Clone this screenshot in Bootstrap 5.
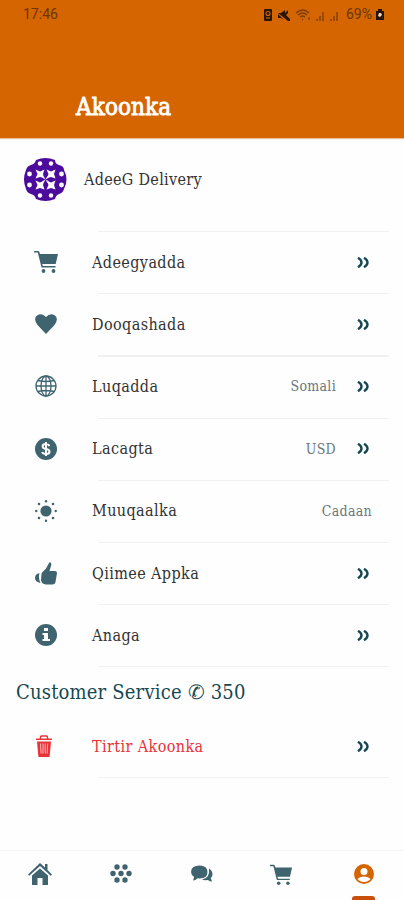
<!DOCTYPE html>
<html lang="so">
<head>
<meta charset="utf-8">
<meta name="viewport" content="width=device-width, initial-scale=1">
<title>Akoonka</title>
<link href="https://cdn.jsdelivr.net/npm/bootstrap@5.3.0/dist/css/bootstrap.min.css" rel="stylesheet">
<style>
:root{--slate:#3f6470;--deep:#164852;--brand:#d46500}
body{font-family:"DejaVu Serif Condensed","DejaVu Serif",serif;font-stretch:condensed;background:#fefefe;color:#333;height:900px;overflow:hidden}
.topbar{height:138px;background:var(--brand);box-shadow:0 1px 1px #e9bd94}
.status{height:29px;padding:0 20px 0 23px;font:14px/29px Roboto,sans-serif;color:#6b3508}
.title{font-size:24px;line-height:30px;font-weight:normal;-webkit-text-stroke:.8px #fff;color:#fff;letter-spacing:.1px;margin:63px 0 0 76px}
.profile{height:93px;padding:0 0 10px 24px}
.profile span{margin-left:17px;font-size:16px;letter-spacing:.3px}
.item{height:62.2px;border:0;padding:0 34px 0 32px;position:relative;background:none}
.item::before{content:"";position:absolute;left:98px;right:15px;top:0;height:1px;background:#f1f1f1}
.item.strong::before{height:2px}
.item.removal::before{display:none}
.item .ico{width:27px;text-align:center;line-height:0;flex:none}
.item .lbl{margin-left:33px;padding-top:1px;font-size:16px;line-height:24px;letter-spacing:.4px;color:#333;white-space:nowrap}
.item .val{font-size:14px;letter-spacing:.3px;padding-top:1px;color:#69777c;margin-left:auto}
.item .val.cadaan{margin-right:-2px}
.item .chev{margin-left:21px;margin-right:1px}
.item .lbl + .chev{margin-left:auto}
.item.removal .lbl,.item.removal .ico{color:#e83238}
.item.removal .ico{padding-right:3px}
.item.last::after{content:"";position:absolute;left:98px;right:15px;bottom:0;height:1px;background:#f2f2f2}
.service{height:49px;padding:3px 0 0 16px;font-size:20px;letter-spacing:.18px;color:var(--deep);white-space:nowrap;position:relative}
.service::before{content:"";position:absolute;left:98px;right:15px;top:0;height:1px;background:#f2f2f2}
.tabs{height:50px;border-top:1px solid #f5f5f5;background:#fefefe}
.tabs a{width:20%;color:var(--slate);position:relative;line-height:0;padding-top:12px;text-align:center}
.tabs a.active{color:var(--brand)}
.tabs a.active::after{content:"";position:absolute;left:50%;margin-left:-12px;bottom:0;width:23px;height:4px;border-radius:3px 3px 0 0;background:#c8500a}
svg{fill:currentColor}
.ico{color:var(--slate)}.chev{color:var(--deep);line-height:0}
</style>
</head>
<body class="d-flex flex-column">
<svg width="0" height="0" class="position-absolute" aria-hidden="true">
<symbol id="cart" viewBox="0 0 26 24"><path d="M1 1h4q1 0 1.400 1L7 4h18l-2.300 10H9.200l.6 2H22.500v1.500H8.500L4.800 2.500H1z"/><circle cx="10.500" cy="21" r="1.900"/><circle cx="20.500" cy="21" r="1.900"/></symbol>
<symbol id="more" viewBox="0 0 12 11"><path fill="none" stroke="currentColor" stroke-width="2.400" d="M1 .8Q4.500 3 4.500 5.500T1 10.200M7 .8q3.500 2.200 3.500 4.700T7 10.200"/></symbol>
</svg>
<header class="topbar flex-shrink-0">
<div class="status d-flex align-items-center justify-content-between"><span>17:46</span>
<span class="d-flex align-items-center">
<svg width="79" height="14" viewBox="0 0 79 14"><g fill="#2a1606"><path d="M1 2q0-1 1-1h6q1 0 1 1v10q0 1-1 1H2q-1 0-1-1z"/><path d="M15 5h3l4-3v3l3-3v3l-2 2 4 4v2h-2L15 5zM15 6l6 6-3-2h-3z"/></g><g fill="none" stroke="#d46500" stroke-width="1.100"><circle cx="5" cy="5.500" r="2"/><path d="M3 10h4"/></g><g fill="none" stroke="#7b3c06" stroke-width="1.300"><path d="M33 5q7-6 13 0M35 7q5-4 9 0M37 9q3-2 5 0M39 11l1 1M46 9v3M54 11v2M57 8v5M60 4v9M68 11v2M71 8v5M74 4v9"/></g></svg>
<span class="ms-1">69%</span>
<svg class="ms-1" width="8" height="13" viewBox="0 0 8 13"><path fill="#26140a" d="M2 1h4v2h2v9H0V3h2z"/><path fill="#f3d3b5" d="M3 5h2l1 2-2 2-2-1z"/></svg>
</span></div>
<h1 class="title">Akoonka</h1>
</header>
<main class="flex-grow-1">
<div class="profile d-flex align-items-center">
<svg width="43" height="43" viewBox="0 0 43 43"><path fill="#4c0b9c" d="M12 2Q21.500-2 31 2q0 4 4 5 5 1 5 5 5 9.500 0 19-1 4-5 5-3 1-4 5-9.500 4-19 0-1-4-5-5-4-1-5-5-4-9.500 0-19 1-4 5-5 4-1 5-5z"/><g fill="#fff"><circle cx="16" cy="5.500" r="2.200"/><circle cx="27" cy="5.500" r="2.200"/><circle cx="16" cy="37.500" r="2.200"/><circle cx="27" cy="37.500" r="2.200"/><circle cx="5.500" cy="16" r="2.400"/><circle cx="5.500" cy="27" r="2.400"/><circle cx="37.500" cy="16" r="2.400"/><circle cx="37.500" cy="27" r="2.400"/><path id="star" d="M11.500 11.500l4.500 2 4.500-2-1.500 4.500 1.500 4.500-4.500-1.500-4.500 1.500 2-4.500z"/><use href="#star" x="11"/><use href="#star" y="11"/><use href="#star" x="11" y="11"/><path d="M18 18h7v7h-7z"/></g><path fill="#4c0b9c" d="M21.500 14l2 4-2 3.500-2-3.500zM21.500 21.500l2 3.500-2 4-2-4zM14 21.500l4-2 3.500 2-3.500 2zM21.500 21.500l3.500-2 4 2-4 2z"/></svg>
<span>AdeeG Delivery</span>
</div>
<div class="list-group list-group-flush">
<a href="#" class="list-group-item item d-flex align-items-center"><span class="ico"><svg width="26" height="24"><use href="#cart"/></svg></span><span class="lbl">Adeegyadda</span><span class="chev"><svg width="12" height="11"><use href="#more"/></svg></span></a>
<a href="#" class="list-group-item item d-flex align-items-center"><span class="ico"><svg width="22" height="20" viewBox="0 0 22 20"><path d="M11 20L2.500 11Q-2 5 2 1.500 7-1.500 11 3q4-4.500 9-1.500 4 3.500-.5 9.500z"/></svg></span><span class="lbl">Dooqashada</span><span class="chev"><svg width="12" height="11"><use href="#more"/></svg></span></a>
<a href="#" class="list-group-item item strong d-flex align-items-center"><span class="ico"><svg width="22" height="22" viewBox="0 0 22 22"><g fill="none" stroke="currentColor" stroke-width="1.300"><circle cx="11" cy="11" r="10"/><ellipse cx="11" cy="11" rx="5" ry="10"/><path d="M11 1v20M1 11h20M3 5.500q8 2 16 0M3 16.500q8-2 16 0"/></g></svg></span><span class="lbl">Luqadda</span><span class="val">Somali</span><span class="chev"><svg width="12" height="11"><use href="#more"/></svg></span></a>
<a href="#" class="list-group-item item d-flex align-items-center"><span class="ico"><svg width="22" height="22" viewBox="0 0 22 22"><circle cx="11" cy="11" r="11"/><path fill="none" stroke="#fff" stroke-width="2" d="M14.500 8q-1-2-3.500-2-3.300 0-3.300 2.300T11 11q3.500.5 3.500 2.700T11 16q-3 0-3.800-2M11 4v14"/></svg></span><span class="lbl">Lacagta</span><span class="val">USD</span><span class="chev"><svg width="12" height="11"><use href="#more"/></svg></span></a>
<a href="#" class="list-group-item item d-flex align-items-center"><span class="ico"><svg width="22" height="22" viewBox="0 0 22 22"><circle cx="11" cy="11" r="5.600"/><g><circle cx="11" cy="1.300" r="1.200"/><circle cx="11" cy="20.700" r="1.200"/><circle cx="1.300" cy="11" r="1.200"/><circle cx="20.700" cy="11" r="1.200"/><circle cx="4" cy="4" r="1.300"/><circle cx="18" cy="4" r="1.300"/><circle cx="4" cy="18" r="1.300"/><circle cx="18" cy="18" r="1.300"/></g></svg></span><span class="lbl">Muuqaalka</span><span class="val cadaan">Cadaan</span></a>
<a href="#" class="list-group-item item d-flex align-items-center"><span class="ico"><svg width="22" height="23" viewBox="0 0 22 23"><path d="M6.500 12q0-1.500 1.500-2.500l3-3L14 1q1-1.500 2 0 .7 1 0 3l-1.500 5H20q2 0 2 2l-1.500 9q-.5 2.500-3 2.500H11Q6.500 22 6 18zM4.500 11q-1.500 5 1 10Q0 20 0 16t4.500-5z"/></svg></span><span class="lbl">Qiimee Appka</span><span class="chev"><svg width="12" height="11"><use href="#more"/></svg></span></a>
<a href="#" class="list-group-item item d-flex align-items-center"><span class="ico"><svg width="22" height="22" viewBox="0 0 22 22"><circle cx="11" cy="11" r="11"/><path fill="#fff" d="M9 4h4v3H9zM7.500 9H13v6h2v2H7.500v-2H9v-4H7.500z"/></svg></span><span class="lbl">Anaga</span><span class="chev"><svg width="12" height="11"><use href="#more"/></svg></span></a>
</div>
<div class="service d-flex align-items-center"><span>Customer Service ✆ 350</span></div>
<div class="list-group list-group-flush">
<a href="#" class="list-group-item item removal last d-flex align-items-center"><span class="ico"><svg width="18" height="22" viewBox="0 0 18 22"><path fill="none" stroke="currentColor" stroke-width="1.400" d="M5.500 4V2q0-1 1-1h5q1 0 1 1v2"/><path d="M1 3.500h16V5H1zM2 6.500h14L14.700 21q0 1-1 1H4.300q-1 0-1-1z"/><path stroke="#fbb" stroke-width="1" d="M5.500 8.500l.6 10M8 8.500v10M10.200 8.500v10M12.700 8.500l-.6 10"/></svg></span><span class="lbl">Tirtir Akoonka</span><span class="chev"><svg width="12" height="11"><use href="#more"/></svg></span></a>
</div>
</main>
<nav class="tabs d-flex flex-shrink-0">
<a href="#"><svg width="24" height="23" viewBox="0 0 24 23"><path d="M12 0l5 4.500V1h2.500v6L24 11.500l-1.200 1.200L12 3 1.200 12.700 0 11.500z"/><path d="M4 12.500l8-7 8 7V22h-5.500v-7h-5v7H4z"/></svg></a>
<a href="#"><svg width="22" height="22" viewBox="0 0 22 22"><circle cx="7" cy="4" r="2.700"/><circle cx="15" cy="4" r="2.700"/><circle cx="3" cy="10.500" r="2.700"/><circle cx="11" cy="10.500" r="2.700"/><circle cx="19" cy="10.500" r="2.700"/><circle cx="7" cy="17" r="2.700"/><circle cx="15" cy="17" r="2.700"/></svg></a>
<a href="#"><svg width="22" height="22" viewBox="0 0 22 22"><path d="M8.500 2.500q8 0 8 6.500t-8 6.500l-2-.3Q4.500 17.500 2 17.500L3.200 14Q0 12 0 9q0-6.500 8.500-6.500zM18 5.500q3.500 2 3.500 6 0 2-1.800 3.500L21 18.500q-2.500 0-4-1.500-4 .5-6-.5 8-1 7-11z"/></svg></a>
<a href="#" class="pe-1"><svg width="24" height="24"><use href="#cart"/></svg></a>
<a href="#" class="active"><svg width="20" height="22" viewBox="0 0 20 22"><circle cx="10" cy="11" r="10"/><circle cx="10" cy="8.500" r="3.500" fill="#fff"/><path fill="#fff" d="M3.500 16q2-2.500 6.500-2.500t6.500 2.500q-2.500 3-6.500 3t-6.500-3z"/></svg></a>
</nav>
<script src="https://cdn.jsdelivr.net/npm/bootstrap@5.3.0/dist/js/bootstrap.bundle.min.js"></script>
</body>
</html>
